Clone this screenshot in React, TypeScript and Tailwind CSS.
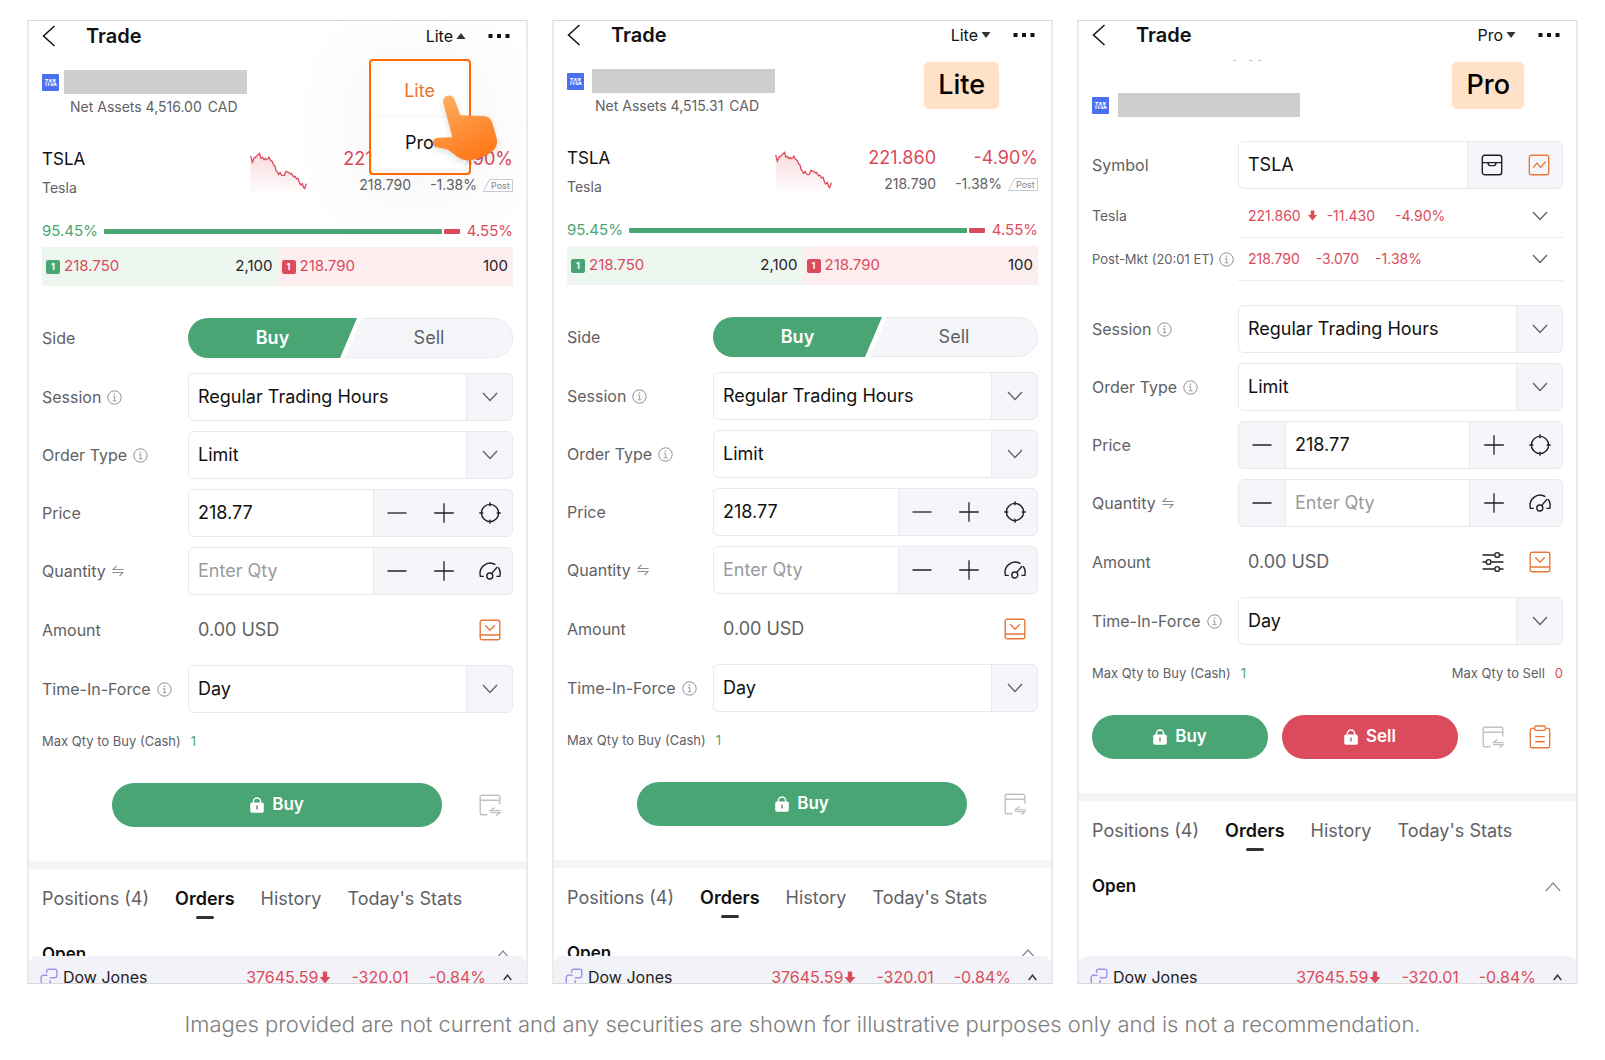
import { ReactNode, useId, useState } from "react";
import clsx from "clsx";

interface IconProps {
  className?: string;
}

const InfoIcon = ({ className }: IconProps) => (
  <svg viewBox="0 0 15 15" className={clsx("w-[15px] h-[15px] shrink-0 text-[#8d9095]", className)} fill="none" stroke="currentColor">
    <circle cx="7.5" cy="7.5" r="6.7" strokeWidth="1" />
    <path d="M6 6.6h1.7v4M5.7 10.8h3.8" strokeWidth="0.9" />
    <circle cx="7.4" cy="4.2" r="0.8" fill="currentColor" stroke="none" />
  </svg>
);

const SwapIcon = () => (
  <svg viewBox="0 0 12 12" className="w-3 h-3 shrink-0 text-[#8d9095]" fill="none" stroke="currentColor" strokeWidth="1.1">
    <path d="M11.5 4.5H1L4.5 0.8M0.5 7.5H11L7.5 11.2" />
  </svg>
);

const ChevronDown = () => (
  <svg viewBox="0 0 16 10" className="w-4 h-[10px] text-[#5f6165]" fill="none" stroke="currentColor" strokeWidth="1.3">
    <path d="M1 1l7 7.5L15 1" />
  </svg>
);

const MinusIcon = () => (
  <svg viewBox="0 0 20 20" className="w-5 h-5" fill="none" stroke="currentColor" strokeWidth="1.3">
    <path d="M0.5 10h19" />
  </svg>
);

const PlusIcon = () => (
  <svg viewBox="0 0 20 20" className="w-5 h-5" fill="none" stroke="currentColor" strokeWidth="1.3">
    <path d="M0.2 10h19.6M10 0.2v19.6" />
  </svg>
);

const TargetIcon = () => (
  <svg viewBox="0 0 22 22" className="w-[22px] h-[22px]" fill="none" stroke="currentColor" strokeWidth="1.4">
    <circle cx="11" cy="11" r="8.6" />
    <path d="M11 0.3v4M11 17.7v4M0.3 11h4M17.7 11h4" />
  </svg>
);

const GaugeIcon = () => (
  <svg viewBox="0 0 22 22" className="w-[22px] h-[22px]" fill="none" stroke="currentColor" strokeWidth="1.4">
    <path d="M4.8 16.4H1.4C0.4 12 1.5 8.2 4.6 5.6c3.7-3 8.4-3 11.8-0.9M19.2 7.3c2 2.6 2.4 5.8 1.6 9.1h-3.4" />
    <circle cx="10.8" cy="16" r="3" />
    <path d="M12.6 13.6l5.6-6.6" />
  </svg>
);

const AmountIcon = () => (
  <svg viewBox="0 0 22 22" className="w-[22px] h-[22px] text-[#e8793a]" fill="none" stroke="currentColor" strokeWidth="1.4">
    <rect x="1.2" y="1.2" width="19.6" height="19.6" rx="2" />
    <path d="M1.2 16h19.6M6.2 6.2l4.8 5 4.8-5" />
  </svg>
);

const SlidersIcon = () => (
  <svg viewBox="0 0 22 22" className="w-[22px] h-[22px]" fill="none" stroke="currentColor" strokeWidth="1.4">
    <path d="M0.5 4h12M18 4h3.5M0.5 11h3.4M9.4 11h12.1M0.5 18h12M18 18h3.5" />
    <circle cx="15.2" cy="4" r="2.4" />
    <circle cx="6.6" cy="11" r="2.4" />
    <circle cx="15.2" cy="18" r="2.4" />
  </svg>
);

const InboxIcon = () => (
  <svg viewBox="0 0 22 22" className="w-[22px] h-[22px]" fill="none" stroke="currentColor" strokeWidth="1.4">
    <rect x="1.3" y="1.3" width="19.4" height="19.4" rx="2.5" />
    <path d="M1.3 8.6h19.4M7 8.6c0 2 0.8 3 2.200 3h3.600c1.400 0 2.200-1 2.200-3" />
  </svg>
);

const ChartIcon = () => (
  <svg viewBox="0 0 22 22" className="w-[22px] h-[22px] text-[#e8793a]" fill="none" stroke="currentColor" strokeWidth="1.4">
    <rect x="1.3" y="1.3" width="19.4" height="19.4" rx="2" />
    <path d="M5 13.6l4-4.6 3.6 4.4 5-5.6" />
  </svg>
);

const CardSwapIcon = () => (
  <svg viewBox="0 0 22 22" className="w-[22px] h-[22px] text-[#bfc1c5]" fill="none" stroke="currentColor" strokeWidth="1.4">
    <path d="M8.5 20.8H3a1.8 1.8 0 0 1-1.8-1.8V3A1.8 1.8 0 0 1 3 1.2h16A1.8 1.8 0 0 1 20.8 3v7.5M1.2 6.2h19.6" />
    <path d="M21.5 16.6h-10l4-3M11 18.6h10l-3.6 3" />
  </svg>
);

const ClipboardIcon = () => (
  <svg viewBox="0 0 22 24" className="w-[22px] h-6 text-[#e8793a]" fill="none" stroke="currentColor" strokeWidth="1.4">
    <path d="M5.6 3.4H3a1.7 1.7 0 0 0-1.7 1.7V21A1.7 1.7 0 0 0 3 22.7h16a1.7 1.7 0 0 0 1.7-1.7V5.1A1.7 1.7 0 0 0 19 3.4h-2.6" />
    <rect x="5.6" y="1" width="10.8" height="4.4" rx="1.5" />
    <path d="M6.2 11.6h9.6M6.2 16.8h9.6" />
  </svg>
);

const LockIcon = () => (
  <svg viewBox="0 0 14 16" className="w-[14px] h-4" fill="none">
    <path d="M3.4 6V4.6a3.6 3.6 0 0 1 7.2 0V6" stroke="currentColor" strokeWidth="1.4" />
    <rect x="0.2" y="5.4" width="13.6" height="10.4" rx="1.8" fill="currentColor" />
    <path d="M7 8.6v4" stroke="#00000088" strokeWidth="1.4" />
  </svg>
);

const ArrowDown = ({ className }: IconProps) => (
  <svg viewBox="0 0 10 12" className={className} fill="currentColor">
    <path d="M3 0.5h4v5h3L5 11.5 0 5.5h3z" />
  </svg>
);

const TaxLogo = () => (
  <svg viewBox="0 0 17 17" className="w-[17px] h-[17px] shrink-0">
    <rect width="17" height="17" rx="1" fill="#4a6ff0" />
    <text x="8.5" y="9" textAnchor="middle" fontSize="6" fontWeight="900" fontFamily="Roboto, sans-serif" fill="#fff">TAX</text>
    <text x="8.5" y="12" textAnchor="middle" fontSize="5" fontWeight="900" fontFamily="Roboto, sans-serif" fill="#fff">TFSA</text>
    <rect x="1" y="7.8" width="15" height="0.8" fill="#4a6ff0" />
  </svg>
);

const LinkIcon = () => (
  <svg viewBox="0 0 18 18" className="w-[18px] h-[18px] text-[#a294e6]" fill="none" stroke="currentColor" strokeWidth="1.4">
    <path d="M6.6 5V3.2A2 2 0 0 1 8.600 1.200h6.200a2 2 0 0 1 2 2v4.600a2 2 0 0 1-2 2h-5" />
    <path d="M7.5 7.300H3.200a2 2 0 0 0-2 2v4.500a2 2 0 0 0 2 2h5a2 2 0 0 0 2-2V12" />
  </svg>
);

const Sparkline = () => {
  const gradient = useId();
  return (
    <svg viewBox="688 415 178 138" className="w-[59px] h-[46px] mt-[6px] shrink-0">
      <defs>
        <linearGradient id={gradient} x1="0" y1="0" x2="0" y2="1">
          <stop offset="0" stopColor="#dc4b5c" stopOpacity="0.2" />
          <stop offset="1" stopColor="#dc4b5c" stopOpacity="0" />
        </linearGradient>
      </defs>
      <path
        d="M690 430l5 18 5-12 4-2 4-4 5-5 4-3 4 14 5-2 4 7 4-4 3 4 4-2 4-6 4 9 6 4 4 10 5 5 2 12 5 5 3 7 5-5 3 6 4 3 6-1 4-12 5 2 4 2 5 4 3-2 6 10 5-1 4 8 5-2 4 13 4 7 5-4 4 12 3 3 5-15V552H690z"
        fill={`url(#${gradient})`}
      />
      <path
        d="M690 430l5 18 5-12 4-2 4-4 5-5 4-3 4 14 5-2 4 7 4-4 3 4 4-2 4-6 4 9 6 4 4 10 5 5 2 12 5 5 3 7 5-5 3 6 4 3 6-1 4-12 5 2 4 2 5 4 3-2 6 10 5-1 4 8 5-2 4 13 4 7 5-4 4 12 3 3 5-15"
        fill="none"
        stroke="#dc4b5c"
        strokeWidth="4"
      />
    </svg>
  );
};

const PointingHand = ({ className }: IconProps) => (
  <svg viewBox="1230 245 210 225" className={className}>
    <defs>
      <linearGradient id="hand" x1="0" y1="0" x2="0.5" y2="1">
        <stop offset="0" stopColor="#ffb066" />
        <stop offset="1" stopColor="#ff7a1c" />
      </linearGradient>
    </defs>
    <path
      d="M1270 278C1266 253 1296 248 1303 266L1321 315C1348 317 1368 316 1390 317C1404 318 1413 325 1417 338L1430 384C1433 398 1430 410 1421 419C1408 433 1384 444 1354 449C1342 451 1330 450 1320 444C1302 434 1292 420 1277 416L1250 411C1234 406 1233 386 1252 382L1297 381Z"
      fill="url(#hand)"
    />
  </svg>
);

const Cell = ({ label, children }: { label: string; children: ReactNode }) => (
  <button type="button" aria-label={label} className="flex w-[47px] shrink-0 items-center justify-center self-stretch text-[#1f2124]">
    {children}
  </button>
);

interface FieldRowProps {
  label: string;
  htmlFor?: string;
  info?: boolean;
  swap?: boolean;
  children: ReactNode;
}

const FieldRow = ({ label, htmlFor, info, swap, children }: FieldRowProps) => (
  <div className="flex items-center">
    <div className="flex w-[146px] shrink-0 items-center gap-[6px] text-[#5f6165]">
      <label htmlFor={htmlFor} className="whitespace-nowrap">{label}</label>
      {info && <InfoIcon />}
      {swap && <SwapIcon />}
    </div>
    {children}
  </div>
);

const Box = ({ children }: { children: ReactNode }) => (
  <div className="flex h-12 min-w-0 flex-1 items-stretch overflow-hidden rounded-md border border-[#e8e9ec] bg-[#f5f6f9]">
    {children}
  </div>
);

const SelectRow = ({ label, value }: { label: string; value: string }) => {
  const id = useId();
  return (
    <FieldRow label={label} htmlFor={id} info>
      <Box>
        <select id={id} className="min-w-0 flex-1 appearance-none border-r border-[#e8e9ec] bg-white pl-[9px] text-lg text-[#111]">
          <option>{value}</option>
        </select>
        <span className="flex w-[45px] items-center justify-center">
          <ChevronDown />
        </span>
      </Box>
    </FieldRow>
  );
};

interface StepperRowProps {
  label: string;
  initial?: string;
  placeholder?: string;
  pro?: boolean;
  swap?: boolean;
  icon: ReactNode;
  iconLabel: string;
}

const StepperRow = ({ label, initial = "", placeholder, pro, swap, icon, iconLabel }: StepperRowProps) => {
  const id = useId();
  const [value, setValue] = useState(initial);
  const step = (delta: number) => setValue(String(Math.max(0, Math.round((Number(value) + delta) * 100) / 100)));

  const minus = (
    <button type="button" aria-label="Decrease" onClick={() => step(-1)} className="flex w-[46px] shrink-0 items-center justify-center text-[#1f2124]">
      <MinusIcon />
    </button>
  );

  return (
    <FieldRow label={label} htmlFor={id} swap={swap}>
      <Box>
        {pro && minus}
        <input
          id={id}
          value={value}
          placeholder={placeholder}
          onChange={(e) => setValue(e.target.value)}
          className={clsx(
            "min-w-0 flex-1 border-r border-[#e8e9ec] bg-white pl-[9px] text-lg text-[#111] outline-none placeholder:text-[#989ba1]",
            pro && "border-l"
          )}
        />
        {!pro && minus}
        <button type="button" aria-label="Increase" onClick={() => step(1)} className="flex w-[47px] shrink-0 items-center justify-center text-[#1f2124]">
          <PlusIcon />
        </button>
        <button type="button" aria-label={iconLabel} className="flex w-[45px] shrink-0 items-center justify-center text-[#1f2124]">
          {icon}
        </button>
      </Box>
    </FieldRow>
  );
};

const OrderFields = ({ pro }: { pro?: boolean }) => (
  <div className="flex flex-col gap-[10px]">
    <SelectRow label="Session" value="Regular Trading Hours" />
    <SelectRow label="Order Type" value="Limit" />
    <StepperRow label="Price" initial="218.77" pro={pro} icon={<TargetIcon />} iconLabel="Last price" />
    <StepperRow label="Quantity" placeholder="Enter Qty" swap pro={pro} icon={<GaugeIcon />} iconLabel="Position size" />
    <div className="flex h-[50px] items-center">
      <span className="w-[146px] shrink-0 text-[#5f6165]">Amount</span>
      <span className="flex-1 pl-[10px] text-lg text-[#5f6165]">0.00 USD</span>
      {pro && (
        <Cell label="Settings">
          <SlidersIcon />
        </Cell>
      )}
      <Cell label="Amount details">
        <AmountIcon />
      </Cell>
    </div>
    <SelectRow label="Time-In-Force" value="Day" />
  </div>
);

const Header = ({ mode, open }: { mode: string; open?: boolean }) => (
  <header className="flex h-7 items-center pr-[3px] text-[#111]">
    <button type="button" aria-label="Back">
      <svg viewBox="0 0 14 22" className="w-[14px] h-[22px]" fill="none" stroke="currentColor" strokeWidth="1.5">
        <path d="M12.5 1L1.5 11l11 10" />
      </svg>
    </button>
    <h2 className="ml-[30px] flex-1 text-xl font-semibold">Trade</h2>
    <button type="button" className="flex items-center gap-[3px]" aria-expanded={!!open}>
      {mode}
      <svg viewBox="0 0 10 6" className={clsx("w-[10px] h-[6px]", open && "rotate-180")} fill="#333">
        <path d="M0.5 0h9L5 6z" />
      </svg>
    </button>
    <button type="button" aria-label="More" className="ml-[22px]">
      <svg viewBox="0 0 22 4" className="w-[22px] h-1" fill="currentColor">
        <rect x="0.5" y="0" width="4" height="4" rx="0.5" />
        <rect x="9" y="0" width="4" height="4" rx="0.5" />
        <rect x="17.5" y="0" width="4" height="4" rx="0.5" />
      </svg>
    </button>
  </header>
);

const tabs = ["Positions (4)", "Orders", "History", "Today's Stats"];

const OrdersSection = () => {
  const [active, setActive] = useState("Orders");
  return (
    <>
      <div className="-mx-[13px] mt-[34px] h-2 bg-[#f4f6f6]" />
      <div className="mt-4 flex items-start gap-[26px] text-lg text-[#5f6165]">
        {tabs.map((tab) => (
          <button
            key={tab}
            type="button"
            onClick={() => setActive(tab)}
            className={clsx("flex flex-col items-center gap-[3px] whitespace-nowrap", active === tab && "font-semibold text-[#111]")}
          >
            {tab}
            {active === tab && <span className="h-[3px] w-[18px] rounded-full bg-[#333]" />}
          </button>
        ))}
      </div>
      <div className="mt-6 flex h-6 items-center justify-between pr-[2px]">
        <h3 className="text-[17px] font-semibold text-[#111]">Open</h3>
        <button type="button" aria-label="Collapse">
          <svg viewBox="0 0 16 10" className="w-4 h-[10px] text-[#85888e]" fill="none" stroke="currentColor" strokeWidth="1.2">
            <path d="M0.8 9L8 1l7.2 8" />
          </svg>
        </button>
      </div>
    </>
  );
};

const IndexBar = () => (
  <footer className="absolute inset-x-0 bottom-0 h-[27px] overflow-hidden rounded-t-lg bg-[#f2f3f8]">
    <div className="flex h-[42px] items-center pl-[11px] pr-[14px] text-[#dc4b5c]">
      <LinkIcon />
      <span className="ml-[5px] flex-1 text-[#1f2124]">Dow Jones</span>
      <span>37645.59</span>
      <ArrowDown className="ml-px w-3 h-[13px]" />
      <span className="ml-5">-320.01</span>
      <span className="ml-5">-0.84%</span>
      <svg viewBox="0 0 9 7" className="ml-[17px] w-[9px] h-[7px] text-[#333]" fill="none" stroke="currentColor" strokeWidth="1.4">
        <path d="M0.7 6L4.5 1.2 8.3 6" />
      </svg>
    </div>
  </footer>
);

const Panel = ({ children, className }: { children: ReactNode; className?: string }) => (
  <section className={clsx("relative overflow-hidden border-x-2 border-y border-x-[#ebebeb] border-y-[#d9d9d9] bg-white px-[13px]", className)}>
    {children}
    <IndexBar />
  </section>
);

const Badge = ({ children }: { children: ReactNode }) => (
  <div className="absolute right-[52px] top-[41px] flex h-[47px] items-center rounded-[5px] bg-[#fee1c7] px-[14px] text-[27px] font-medium text-black">
    {children}
  </div>
);

const Quote = () => (
  <div className="mt-[25px] flex h-[60px] text-sm text-[#5f6165]">
    <div className="flex-1">
      <div className="text-[17px] leading-7 text-[#111]">TSLA</div>
      <div className="leading-[30px]">Tesla</div>
    </div>
    <Sparkline />
    <div className="w-[102px] text-right">
      <div className="text-lg leading-7 text-[#dc4b5c]">221.860</div>
      <div className="leading-6">218.790</div>
    </div>
    <div className="w-[102px] text-right">
      <div className="text-lg leading-7 text-[#dc4b5c]">-4.90%</div>
      <div className="flex items-center justify-end gap-[6px] leading-6">
        -1.38%
        <svg viewBox="0 0 30 13" className="w-[30px] h-[13px]">
          <path d="M6.5 0.5H29.5v12H0.5z" fill="none" stroke="#c4c6ca" strokeWidth="0.9" />
          <text x="8" y="9.8" fontSize="9" fill="#85888e">Post</text>
        </svg>
      </div>
    </div>
  </div>
);

const Level = ({ price, size, bid }: { price: string; size: string; bid?: boolean }) => (
  <div className={clsx("flex flex-1 items-center pl-1 pr-[5px] text-[15px]", bid ? "bg-[#edf7f0]" : "bg-[#fceeef]")}>
    <span className={clsx("flex h-[14px] w-[14px] items-center justify-center rounded-[2px] text-[9px] font-bold text-white", bid ? "bg-[#4aa574]" : "bg-[#dc4b5c]")}>
      1
    </span>
    <span className="ml-1 flex-1 text-[#dc4b5c]">{price}</span>
    <span className="text-[#1f2124]">{size}</span>
  </div>
);

const Depth = () => (
  <>
    <div className="mt-4 flex h-5 items-center text-[15px]">
      <span className="text-[#4aa574]">95.45%</span>
      <span className="ml-[6px] h-[5px] flex-1 rounded-[1px] bg-[#4aa574]" />
      <span className="ml-[2px] h-[5px] w-4 rounded-[1px] bg-[#dc4b5c]" />
      <span className="ml-[7px] text-[#dc4b5c]">4.55%</span>
    </div>
    <div className="mt-[6px] flex h-[39px]">
      <Level price="218.750" size="2,100" bid />
      <Level price="218.790" size="100" />
    </div>
  </>
);

const SideToggle = () => (
  <div className="mb-[15px] mt-8 flex items-center">
    <span className="w-[146px] shrink-0 text-[#5f6165]">Side</span>
    <div className="flex h-10 flex-1" role="group" aria-label="Side">
      <button type="button" className="w-[52%] rounded-l-full bg-[#4aa574] text-lg font-semibold text-white [clip-path:polygon(0_0,100%_0,calc(100%-17px)_100%,0_100%)]">
        Buy
      </button>
      <button type="button" className="-ml-3 flex-1 rounded-r-full border border-[#e8e9ec] bg-[#f5f6f9] text-lg text-[#5f6165] [clip-path:polygon(17px_0,100%_0,100%_100%,0_100%)]">
        Sell
      </button>
    </div>
  </div>
);

const OrderButton = ({ label, sell }: { label: string; sell?: boolean }) => (
  <button
    type="button"
    className={clsx("flex h-11 flex-1 items-center justify-center gap-2 rounded-full text-[17px] font-semibold text-white", sell ? "bg-[#dc4b5c]" : "bg-[#4aa574]")}
  >
    <LockIcon />
    {label}
  </button>
);

const MaxBuy = () => (
  <span>
    Max Qty to Buy (Cash)<span className="ml-[10px] text-[#4aa574]">1</span>
  </span>
);

const LitePanel = ({ assets, open }: { assets: string; open?: boolean }) => (
  <Panel className={open ? "pt-px" : undefined}>
    <Header mode="Lite" open={open} />
    <div className={clsx("mt-5 flex h-6 items-center", open ? "gap-[5px]" : "gap-2")}>
      <TaxLogo />
      <div className="h-6 w-[183px] bg-[#cecece]" />
    </div>
    <div className="pl-7 text-sm leading-[26px] text-[#5f6165]">
      Net Assets {assets}<span className="ml-[6px]">CAD</span>
    </div>
    <Quote />
    <Depth />
    <SideToggle />
    <OrderFields />
    <div className="mt-[18px] text-[13px] leading-5 text-[#5f6165]">
      <MaxBuy />
    </div>
    <div className="mt-8 flex items-center pl-[70px]">
      <OrderButton label="Buy" />
      <span className="w-6" />
      <Cell label="Conditional order">
        <CardSwapIcon />
      </Cell>
    </div>
    <OrdersSection />
    {open ? (
      <>
        <div className="absolute right-[59px] top-[44px] flex h-[103px] w-[95px] flex-col rounded-lg bg-white text-lg shadow-[0_10px_70px_30px_rgba(0,0,0,0.03)]" role="menu">
          <button type="button" role="menuitem" className="flex-1 border-b border-[#f4f4f4] text-[#e8752a]">Lite</button>
          <button type="button" role="menuitem" className="flex-1 text-[#111]">Pro</button>
        </div>
        <div className="pointer-events-none absolute right-[55px] top-[38px] h-[116px] w-[102px] rounded-[4px] border-2 border-[#ff6a00]" />
        <PointingHand className="pointer-events-none absolute right-[26px] top-[71px] h-[75px] w-[70px] drop-shadow-md" />
      </>
    ) : (
      <Badge>Lite</Badge>
    )}
  </Panel>
);

const ProPanel = () => {
  const symbolId = useId();
  return (
    <Panel className="pb-[84px]">
      <Header mode="Pro" />
      <div className="mt-[11px] flex h-px pl-[141px]">
        <span className="w-[3px] bg-[#c4c4c4]" />
        <span className="ml-[13px] w-1 bg-[#c4c4c4]" />
        <span className="ml-[5px] w-[3px] bg-[#c4c4c4]" />
      </div>
      <div className="mt-8 flex h-6 items-center gap-[9px]">
        <TaxLogo />
        <div className="h-6 w-[182px] bg-[#cecece]" />
      </div>
      <div className="mt-6">
        <FieldRow label="Symbol" htmlFor={symbolId}>
          <Box>
            <input id={symbolId} defaultValue="TSLA" className="min-w-0 flex-1 border-r border-[#e8e9ec] bg-white pl-[9px] text-lg text-[#111] outline-none" />
            <Cell label="Positions">
              <InboxIcon />
            </Cell>
            <Cell label="Chart">
              <ChartIcon />
            </Cell>
          </Box>
        </FieldRow>
      </div>
      <div className="mt-[5px] flex items-center text-sm text-[#5f6165]">
        <span className="w-[146px] shrink-0">Tesla</span>
        <div className="flex h-11 flex-1 items-center border-b border-[#ececee] pl-[10px] text-[#dc4b5c]">
          221.860
          <ArrowDown className="ml-[7px] w-[9px] h-[11px]" />
          <span className="ml-[10px]">-11.430</span>
          <span className="ml-5 flex-1">-4.90%</span>
          <Cell label="Expand quote">
            <ChevronDown />
          </Cell>
        </div>
      </div>
      <div className="flex items-center text-sm text-[#5f6165]">
        <span className="flex w-[146px] shrink-0 items-center justify-between whitespace-nowrap pr-1 text-[13px]">
          Post-Mkt (20:01 ET)
          <InfoIcon />
        </span>
        <div className="flex h-[43px] flex-1 items-center border-b border-[#ececee] pl-[10px] text-[#dc4b5c]">
          218.790
          <span className="ml-4">-3.070</span>
          <span className="ml-4 flex-1">-1.38%</span>
          <Cell label="Expand post-market quote">
            <ChevronDown />
          </Cell>
        </div>
      </div>
      <div className="mt-6">
        <OrderFields pro />
      </div>
      <div className="mt-[18px] flex justify-between text-[13px] leading-5 text-[#5f6165]">
        <MaxBuy />
        <span>
          Max Qty to Sell<span className="ml-[10px] text-[#dc4b5c]">0</span>
        </span>
      </div>
      <div className="mt-8 flex items-center">
        <div className="mr-[11px] flex flex-1 gap-[14px]">
          <OrderButton label="Buy" />
          <OrderButton label="Sell" sell />
        </div>
        <Cell label="Conditional order">
          <CardSwapIcon />
        </Cell>
        <Cell label="Order list">
          <ClipboardIcon />
        </Cell>
      </div>
      <OrdersSection />
      <Badge>Pro</Badge>
    </Panel>
  );
};

export default function App() {
  return (
    <main className="min-h-screen bg-white px-[27px] pt-5 font-['Inter','Liberation_Sans',sans-serif] text-base">
      <div className="grid grid-cols-3 gap-6">
        <LitePanel assets="4,516.00" open />
        <LitePanel assets="4,515.31" />
        <ProPanel />
      </div>
      <p className="mt-6 text-center text-[22px] font-light leading-8 text-[#7d7d7d]">
        Images provided are not current and any securities are shown for illustrative purposes only and is not a recommendation.
      </p>
    </main>
  );
}
